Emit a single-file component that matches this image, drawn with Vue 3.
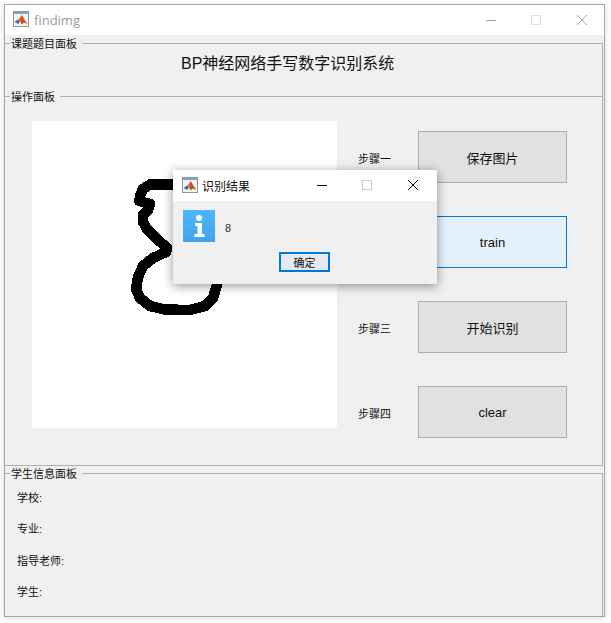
<script setup>
const steps = [
  { label: '步骤一', action: '保存图片' },
  { label: '步骤二', action: 'train', hover: true },
  { label: '步骤三', action: '开始识别' },
  { label: '步骤四', action: 'clear' },
]
const students = ['学校:', '专业:', '指导老师:', '学生:']
const strokePath =
  'M178 184.5 L150 184.5 L143 189 L140 196 L139.5 201 L150 204 L148 210 L143 215 L143 222 L147 229 L156 238 L167 248 L166 252 L153 258 L143 266 L138 277 L136 289 L140 298 L150 306 L165 309.5 L190 310 L205 306 L213 298 L217 285'
</script>

<template>
  <div class="stage">
    <div class="window">
      <header class="titlebar">
        <svg class="app-icon main-icon" viewBox="0 0 16 16" width="16" height="16">
          <rect x="0.5" y="0.5" width="15" height="15" fill="#f4f4f4" stroke="#8f979e" />
          <rect x="1" y="1" width="14" height="2" fill="#86a5c6" />
          <path d="M1.5 11 L5 8.5 L7 9.5 L5.5 13 Z" fill="#2f6fb0" />
          <path d="M5 8.8 L8.8 4 L9.6 7 L7 10 Z" fill="#e8862a" />
          <path d="M8.8 4 L11 8 L14.5 13 L11 11.5 L8.5 13.5 L7 10 Z" fill="#d9481f" />
        </svg>
        <span class="app-name">findimg</span>
        <div class="controls">
          <svg viewBox="0 0 10 10" width="10" height="10"><path d="M0 5.5H10" stroke="#a3a3a3" /></svg>
          <svg viewBox="0 0 10 10" width="10" height="10"><rect x="0.5" y="0.5" width="9" height="9" fill="none" stroke="#e0e0e0" /></svg>
          <svg viewBox="0 0 10 10" width="10" height="10"><path d="M0 0L10 10M10 0L0 10" stroke="#a3a3a3" /></svg>
        </div>
      </header>

      <section class="panel panel-topic">
        <span class="legend">课题题目面板</span>
        <h1 class="topic">BP神经网络手写数字识别系统</h1>
      </section>

      <section class="panel panel-ops">
        <span class="legend">操作面板</span>
        <div class="canvas">
          <svg viewBox="32 121 305 307" width="305" height="307">
            <path :d="strokePath" fill="none" stroke="#000" stroke-width="10.5" stroke-linejoin="round" stroke-linecap="round" shape-rendering="crispEdges" />
          </svg>
        </div>
        <div class="steps">
          <div v-for="step in steps" :key="step.label" class="step">
            <span class="step-label">{{ step.label }}</span>
            <button class="step-btn" :class="{ hover: step.hover }">{{ step.action }}</button>
          </div>
        </div>
      </section>

      <section class="panel panel-student">
        <span class="legend">学生信息面板</span>
        <div v-for="item in students" :key="item" class="student-row">{{ item }}</div>
      </section>
    </div>

    <div class="dialog">
      <header class="dialog-title">
        <svg class="app-icon" viewBox="0 0 16 16" width="16" height="16">
          <rect x="0.5" y="0.5" width="15" height="15" fill="#f4f4f4" stroke="#8f979e" />
          <rect x="1" y="1" width="14" height="2" fill="#86a5c6" />
          <path d="M1.5 11 L5 8.5 L7 9.5 L5.5 13 Z" fill="#2f6fb0" />
          <path d="M5 8.8 L8.8 4 L9.6 7 L7 10 Z" fill="#e8862a" />
          <path d="M8.8 4 L11 8 L14.5 13 L11 11.5 L8.5 13.5 L7 10 Z" fill="#d9481f" />
        </svg>
        <span class="dialog-name">识别结果</span>
        <div class="dialog-controls">
          <svg viewBox="0 0 10 10" width="10" height="10"><path d="M0 5.5H10" stroke="#000" /></svg>
          <svg viewBox="0 0 10 10" width="10" height="10"><rect x="0.5" y="0.5" width="9" height="9" fill="none" stroke="#ccc" /></svg>
          <svg viewBox="0 0 10 10" width="10" height="10"><path d="M0 0L10 10M10 0L0 10" stroke="#000" /></svg>
        </div>
      </header>
      <div class="dialog-body">
        <svg class="info" viewBox="0 0 32 32" width="32" height="32">
          <defs>
            <linearGradient id="infoBg" x1="0" y1="0" x2="0" y2="1">
              <stop offset="0" stop-color="#4fb6fb" />
              <stop offset="1" stop-color="#41a4ea" />
            </linearGradient>
          </defs>
          <rect width="32" height="32" fill="url(#infoBg)" />
          <circle cx="16" cy="8" r="3" fill="#fff" />
          <path d="M12 13H19V24H21.5V27H11.5V24H14.5V16H12Z" fill="#fff" />
        </svg>
        <span class="result">8</span>
      </div>
      <div class="dialog-foot">
        <button class="ok">确定</button>
      </div>
    </div>
  </div>
</template>

<style scoped>
.stage {
  position: relative;
  width: 611px;
  height: 623px;
  overflow: hidden;
  background: #fff;
  font-family: "Liberation Sans", "Noto Sans CJK SC", sans-serif;
  color: #111;
}
.window {
  position: relative;
  top: 4px;
  left: 4px;
  width: 601px;
  height: 613px;
  box-sizing: border-box;
  border: 1px solid #a6a6a6;
  background: #f0f0f0;
  box-shadow: 0 1px 6px rgba(0, 0, 0, 0.16);
  display: flex;
  flex-direction: column;
}
.titlebar {
  height: 30px;
  flex: none;
  background: #fff;
  display: flex;
  align-items: center;
  padding-left: 8px;
}
.app-icon {
  flex: none;
}
.main-icon {
  margin-bottom: 2px;
}
.app-name {
  margin-left: 5px;
  font-family: "Open Sans", sans-serif;
  font-size: 13px;
  color: #9b9b9b;
}
.controls {
  margin-left: auto;
  margin-right: 17px;
  display: flex;
  gap: 35px;
}
.controls svg:last-child,
.dialog-controls svg:last-child {
  margin-left: 1px;
}
.panel {
  position: relative;
  box-sizing: border-box;
  margin-right: 1px;
  border-top: 1px solid #b0b0b0;
  border-right: 1px solid #b0b0b0;
}
.legend {
  position: absolute;
  top: -6px;
  left: 5px;
  padding: 0 5px 0 1px;
  background: #f0f0f0;
  font-size: 11px;
  line-height: 13px;
}
.panel-topic {
  margin-top: 8px;
  height: 53px;
}
.topic {
  margin: 0;
  padding-top: 10px;
  padding-left: 176px;
  font-weight: 400;
  font-size: 16px;
  line-height: 19px;
}
.panel-ops {
  height: 370px;
  border-bottom: 1px solid #b0b0b0;
  display: flex;
  align-items: flex-start;
  padding: 24px 0 0 27px;
}
.canvas {
  width: 305px;
  height: 307px;
  background: #fff;
  flex: none;
}
.canvas svg {
  display: block;
}
.steps {
  margin-left: 21px;
  padding-top: 10px;
  display: flex;
  flex-direction: column;
  gap: 33px;
}
.step {
  display: flex;
  align-items: center;
  height: 52px;
}
.step-label {
  width: 60px;
  font-size: 11px;
  padding-top: 1px;
}
.step-btn {
  width: 149px;
  height: 52px;
  box-sizing: border-box;
  padding: 0;
  border: 1px solid #adadad;
  background: #e1e1e1;
  font: 400 13px "Liberation Sans", "Noto Sans CJK SC", sans-serif;
  color: #111;
}
.step-btn.hover {
  border-color: #0078d7;
  background: #e5f1fb;
}
.panel-student {
  margin-top: 7px;
  flex: 1;
  padding: 9px 0 0 12px;
}
.student-row {
  height: 31.3px;
  line-height: 31.3px;
  font-size: 11px;
}
.dialog {
  position: absolute;
  left: 173px;
  top: 170px;
  width: 264px;
  height: 114px;
  background: #f0f0f0;
  box-shadow: 0 2px 10px rgba(0, 0, 0, 0.42);
  display: flex;
  flex-direction: column;
}
.dialog-title {
  flex: none;
  height: 31px;
  background: #fff;
  display: flex;
  align-items: center;
  padding: 0 0 1px 9px;
  box-sizing: border-box;
}
.dialog-name {
  margin-left: 4px;
  font-size: 12px;
}
.dialog-controls {
  margin-left: auto;
  margin-right: 19px;
  display: flex;
  gap: 35px;
}
.dialog-body {
  display: flex;
  align-items: center;
  padding: 9px 0 0 10px;
}
.info {
  flex: none;
}
.result {
  margin-left: 10px;
  padding-top: 4px;
  font-size: 11px;
  color: #333;
}
.dialog-foot {
  display: flex;
  justify-content: center;
  padding: 10px 1px 0 0;
}
.ok {
  width: 51px;
  height: 20px;
  box-sizing: border-box;
  padding: 0;
  border: 2px solid #0078d7;
  background: #e4e9f2;
  font: 400 11px "Liberation Sans", "Noto Sans CJK SC", sans-serif;
  color: #111;
}
</style>
